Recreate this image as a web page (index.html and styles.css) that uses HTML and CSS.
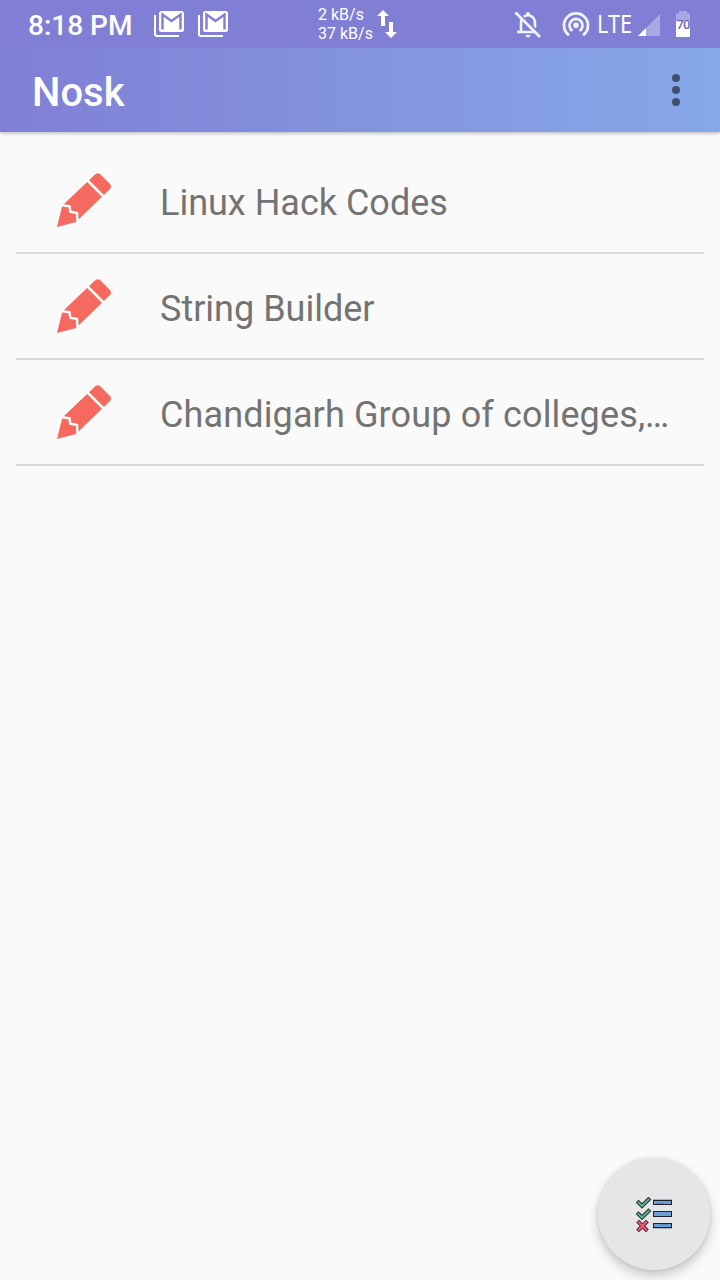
FILE: index.html
```html
<!DOCTYPE html>
<html lang="en">
<head>
<meta charset="utf-8">
<title>Nosk</title>
<link rel="stylesheet" href="styles.css">
</head>
<body>
<svg class="defs" aria-hidden="true">
  <symbol id="mail" viewBox="0 0 30 26">
    <path d="M1 4V23Q1 25 3 25H25" fill="none" stroke="#fff" stroke-width="2"/>
    <rect x="5" y="0" width="25" height="21" rx="2.500" fill="#fff"/>
    <path d="M8.500 18.500V3.500L17.500 10L26.500 3.500V18.500" fill="none" stroke="#807fd5" stroke-width="2.400"/>
  </symbol>
  <symbol id="pencil" viewBox="0 0 56 56">
    <path fill="#f6695e" d="M1 55L6 35L9 31L38.500 3Q41 0 44 2L54 12Q56 14.500 54 17L23 47L20 50Z"/>
    <path d="M31 8L48 25M6.500 33.300L13.500 34.300L14.300 39.800L21 41L21.500 50" fill="none" stroke="#fafafa" stroke-width="2.500"/>
  </symbol>
</svg>
<div class="screen">
  <div class="status">
    <span class="clock">8:18 PM</span>
    <svg class="mail"><use href="#mail"/></svg>
    <svg class="mail"><use href="#mail"/></svg>
    <div class="speed"><span>2 kB/s</span><span>37 kB/s</span></div>
    <svg class="arrows" viewBox="0 0 20 30"><path fill="#fff" d="M6 1L12 7H8V17H4V7H0ZM14 29L8 23H12V13H16V23H20Z"/></svg>
    <svg class="bell" viewBox="0 0 28 28">
      <path d="M7 21V12Q7 5.500 14 4Q21 5.500 21 12V17M3 21H22" fill="none" stroke="#f3f3fb" stroke-width="2.600"/>
      <path d="M12 4Q12 1 14 1Q16 1 16 4ZM11.500 24H16.500Q16 26.500 14 26.500Q12 26.500 11.500 24Z" fill="#f3f3fb"/>
      <path d="M3 .5L27.500 24.500" stroke="#807fd5" stroke-width="2"/>
      <path d="M1.500 1.500L26 26" stroke="#f3f3fb" stroke-width="2.700"/>
    </svg>
    <svg class="hotspot" viewBox="0 0 28 28"><g fill="none" stroke="#f3f3fb" stroke-width="2.700"><path d="M7 24.200A12 12 0 1 1 21 24.200"/><path d="M10.300 19.800A6.500 6.500 0 1 1 17.700 19.800"/></g><circle cx="14" cy="14.300" r="2.800" fill="#f3f3fb"/></svg>
    <span class="lte">LTE</span>
    <svg class="signal" viewBox="0 0 22 22"><path d="M0 22L22 0V22Z" fill="#a9a8e2"/><path d="M0 22L8 14V22Z" fill="#fff"/></svg>
    <div class="battery"><span>70</span></div>
  </div>
  <header class="bar">
    <h1>Nosk</h1>
    <svg class="more" viewBox="0 0 8 32" fill="#404f70"><circle cx="4" cy="4" r="4"/><circle cx="4" cy="16" r="4"/><circle cx="4" cy="28" r="4"/></svg>
  </header>
  <main class="list">
    <div class="item"><svg><use href="#pencil"/></svg><span>Linux Hack Codes</span></div>
    <div class="item"><svg><use href="#pencil"/></svg><span>String Builder</span></div>
    <div class="item"><svg><use href="#pencil"/></svg><span class="college">Chandigarh Group of colleges,…</span></div>
  </main>
  <div class="fab">
    <svg viewBox="0 0 38 36">
      <g fill="none" stroke-linecap="square">
        <path d="M2.500 5.500L6 9L12.500 2.500M2.500 17L6 20.500L12.500 14" stroke="#25293a" stroke-width="4"/>
        <path d="M2.500 5.500L6 9L12.500 2.500M2.500 17L6 20.500L12.500 14" stroke="#55b58b" stroke-width="2"/>
        <path d="M3 25.500L10 32.500M10 25.500L3 32.500" stroke="#33283b" stroke-width="4"/>
        <path d="M3 25.500L10 32.500M10 25.500L3 32.500" stroke="#f2546a" stroke-width="2.400"/>
      </g>
      <path d="M17 2.500H36M17 31.500H36" stroke="#b1b3b7"/>
      <g fill="#6e9ed6" stroke="#1c2233"><rect x="17.500" y="3.500" width="18" height="4"/><rect x="17.500" y="14.500" width="18" height="5"/><rect x="17.500" y="26.500" width="18" height="4"/></g>
      <path d="M21 6.500H28M25 27.500H32" stroke="#5983b8"/>
    </svg>
  </div>
</div>
</body>
</html>
```
FILE: styles.css
```css
* { box-sizing: border-box; }
body { margin: 0; font-family: Roboto, sans-serif; background: #fafafa; }
svg { display: block; flex: none; }
.defs { position: absolute; width: 0; height: 0; }
.screen { position: relative; height: 1280px; overflow: hidden; }
.status { position: relative; z-index: 1; display: flex; height: 48px; background: #807fd5; color: #fff; white-space: nowrap; }
.clock { width: 126px; margin-right: 28px; padding-left: 28px; font-size: 28px; font-weight: 500; line-height: 52px; }
.mail { width: 30px; height: 26px; margin: 11px 14px 0 0; }
.speed { display: flex; flex-direction: column; width: 59px; margin-left: 76px; padding-top: 5px; font-size: 16px; line-height: 19px; }
.arrows { width: 20px; height: 30px; margin-top: 9px; }
.bell { width: 28px; height: 28px; margin: 11px 0 0 117px; }
.hotspot { width: 28px; height: 28px; margin: 11px 0 0 20px; }
.lte { width: 41px; margin-left: 7px; font-family: "Noto Sans", sans-serif; font-size: 25px; line-height: 47px; }
.lte { transform: scaleX(.87); transform-origin: 0 0; }
.signal { width: 22px; height: 22px; margin-top: 14px; }
.battery { width: 14px; height: 26px; margin: 11px 0 0 16px; background: linear-gradient(#a9a8e2 10px, #fff 10px); clip-path: polygon(22% 0, 78% 0, 78% 10%, 100% 10%, 100% 100%, 0 100%, 0 10%, 22% 10%); color: #6868bb; font: 500 13px/28px Roboto, sans-serif; letter-spacing: -1px; text-align: center; }
.bar { position: relative; display: flex; justify-content: space-between; height: 84px; padding: 26px 40px 0 32px; background: linear-gradient(90deg, #807fd5, #86a8e7); box-shadow: 0 1px 4px rgba(0,0,0,.3); }
h1 { margin: 0; color: #fff; font-size: 40px; font-weight: 500; line-height: 38px; }
.more { width: 8px; height: 32px; }
.list { padding: 16px 16px 0; }
.item { display: flex; height: 106px; border-bottom: 2px solid #dadada; padding: 24px 0 0 40px; color: #737373; font-size: 36px; line-height: 62px; white-space: nowrap; }
.item svg { width: 56px; height: 56px; margin-right: 48px; }
.college { letter-spacing: .13px; }
.fab { position: absolute; right: 10px; bottom: 10px; display: flex; justify-content: center; align-items: center; width: 112px; height: 112px; padding: 2px 0 0 2px; border-radius: 50%; background: #e6e6e6; box-shadow: 0 6px 12px rgba(0,0,0,.2), 0 0 4px rgba(0,0,0,.1); }
.fab svg { width: 38px; height: 36px; }
```
